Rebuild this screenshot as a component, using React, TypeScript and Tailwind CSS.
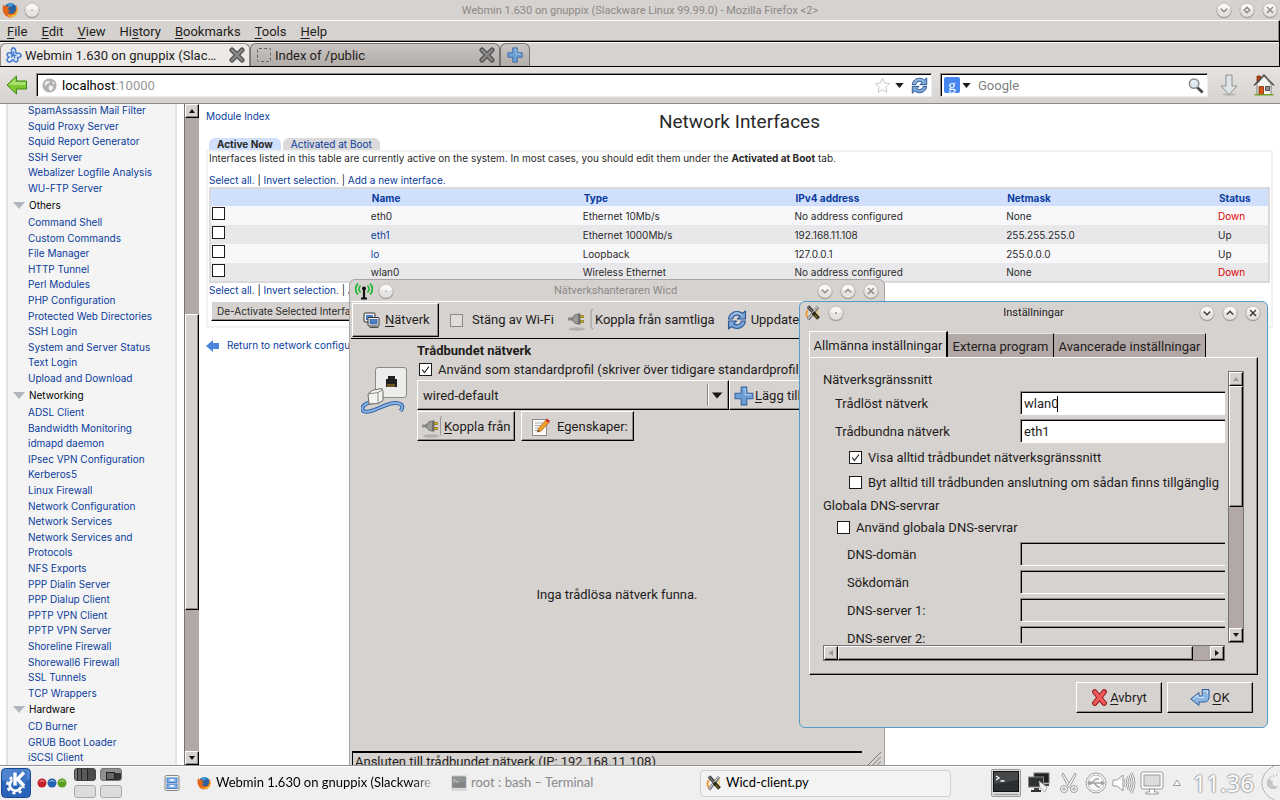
import type { ReactNode } from "react";

const UI = "font-['Roboto',sans-serif]";
const PANEL = "font-['Lato',sans-serif]";
const WEB = "font-['Inter',Arial,sans-serif]";
const RAISED =
  "border border-t-white border-l-white border-r-black border-b-black bg-[#d6d2cf] shadow-[inset_-1px_-1px_0_#8f8a87]";
const SUNKEN =
  "border border-t-[#8f8a87] border-l-[#8f8a87] border-r-[#eee] border-b-[#eee] bg-white shadow-[inset_1px_1px_0_#000]";

/* ---------- icons ---------- */

function Firefox({ className }: { className: string }) {
  return (
    <svg viewBox="0 0 16 16" className={className} aria-hidden="true">
      <circle cx="8.4" cy="7.2" r="6.2" fill="#2b5f9e" />
      <path d="M5 2.5a6 6 0 0 1 7 0c-1 1-2 .6-2.600 2.200L7 5z" fill="#3f9ad6" />
      <path d="M1.600 2.400C.6 4 .4 6 .8 8.600 1.600 13 5 15.600 8.600 15.400c4-.2 6.800-3.400 7-7.200.1-2-.5-4.200-1.800-5.400.6 1.600.6 3 .2 4.200-.3 2.600-2 4.600-4.600 4.800-2 .1-3.400-1-3.800-2.200 1 .4 2 .2 3-.6-1.400-.2-2.800-1.400-2.400-2.800.6-.8 1.200-.6 1.400-1.400C6 4.600 4.800 4 3 4.200c-.6-.4-1-1-1.400-1.800z" fill="#e2661a" />
      <path d="M14.200 4c1 3 .4 6-1.400 7.800-2 2-5 2.200-7.400.6 1 2.200 3.800 3 6.200 2 2.600-1.200 4-4 3.800-6.800-.1-1.400-.5-2.600-1.200-3.600z" fill="#fbc02a" />
    </svg>
  );
}

function RoundButton({ label, kind, dim }: { label: string; kind: "dot" | "down" | "up" | "max" | "close"; dim?: boolean }) {
  return (
    <button aria-label={label} className="block size-4 shrink-0">
      <svg viewBox="0 0 16 16" className="size-4 overflow-visible">
        <circle cx="8" cy="8.700" r="7.500" fill="#8d8987" opacity=".75" />
        <circle cx="8" cy="8" r="7.100" fill="#e6e4e2" stroke="#b5b1ae" strokeWidth=".5" />
        <path d="M2 6.500a6.300 6.300 0 0 1 12 0c-4 2-8 2-12 0z" fill="#fff" opacity=".7" />
        <g fill="none" stroke={dim ? "#8e8b89" : "#3f3d3c"} strokeWidth="1.500">
          {kind === "dot" && <circle cx="8" cy="8" r=".4" strokeWidth=".8" />}
          {kind === "down" && <path d="M4.800 6.500 8 9.700l3.200-3.200" />}
          {kind === "up" && <path d="M4.800 9.500 8 6.300l3.200 3.200" />}
          {kind === "max" && <path d="M8 5.200 10.800 8 8 10.800 5.200 8z" />}
          {kind === "close" && <path d="m5 5 6 6m0-6-6 6" />}
        </g>
      </svg>
    </button>
  );
}

function WebminIcon() {
  return (
    <svg viewBox="0 0 16 16" className="size-4 shrink-0" aria-hidden="true">
      <g fill="#dfe9f8" stroke="#4a7fd0" strokeWidth="1.600" strokeLinejoin="round">
        <path d="M6 1.500c2-1.500 4 .5 3.500 3.500l1 1.500c2.500-1 5 .5 4.500 2.500-.3 1.500-2 1.500-3.500 1.500.5 2 1 4-1 4.500-1.500.5-2.500-1-3.500-2.500-1 1.500-3 3-5 2-2-1.200-.5-3.500 1-4.500C1 9.500.5 7 2 6c1.300-.8 2.500 0 4 .5C5.500 4.500 4.800 2.500 6 1.500z" />
      </g>
      <path d="M7.500 4.500v3l3 1.500M7.500 7.500 5 10.500M5 8l2.500-.5 1.500 4" fill="none" stroke="#4a7fd0" strokeWidth="1.300" />
    </svg>
  );
}

function TabClose() {
  return (
    <svg viewBox="0 0 16 16" className="size-4">
      <path d="m3 3 10 10m0-10L3 13" stroke="#4d4d4d" strokeWidth="5" strokeLinecap="round" />
      <path d="m3 3 10 10m0-10L3 13" stroke="#868686" strokeWidth="2.600" strokeLinecap="round" />
    </svg>
  );
}

function Plus({ className }: { className: string }) {
  return (
    <svg viewBox="0 0 18 18" className={className} aria-hidden="true">
      <path d="M6.500 1h5v5.500H17v5h-5.500V17h-5v-5.500H1v-5h5.500z" fill="#6d9fd6" stroke="#3566a5" strokeLinejoin="round" />
      <path d="M7.800 2.500h2.400v5.300h5.300" fill="none" stroke="#a9c8ec" />
    </svg>
  );
}

function Refresh({ className }: { className: string }) {
  return (
    <svg viewBox="0 0 20 20" className={className} aria-hidden="true">
      <g fill="#7aa6d8" stroke="#2a5591" strokeWidth="1.100" strokeLinejoin="round">
        <path d="M1.500 9C2 4.500 5.500 1.500 10 1.500c2.300 0 4.200.8 5.600 2L18.500 1v8h-8l2.700-2.700A5 5 0 0 0 10 5.200C7.500 5.200 6 7 5.600 9z" />
        <path d="M18.500 11c-.5 4.500-4 7.500-8.500 7.500-2.300 0-4.200-.8-5.600-2L1.500 19v-8h8l-2.700 2.700A5 5 0 0 0 10 14.800c2.500 0 4-1.800 4.400-3.800z" />
      </g>
      <path d="M3 8C4 4.500 7 2.700 10 2.900c2 0 3.800.8 5.400 2.500" fill="none" stroke="#b9d2ef" />
    </svg>
  );
}

function Wicd({ className }: { className: string }) {
  return (
    <svg viewBox="0 0 16 16" className={className} aria-hidden="true">
      <path d="M3 5C1 7.500 1 10.500 3 12.500" fill="none" stroke="#f0952c" strokeWidth="1.800" />
      <path d="M12.500 5c1 1.500 1 3 .5 4.500" fill="none" stroke="#f7c244" strokeWidth="1.200" />
      <path d="m3 1.500 6 6.500" stroke="#454545" strokeWidth="3.400" />
      <path d="m2.500 1.500 5 5" stroke="#9a9a9a" strokeWidth=".8" />
      <path d="M3 14.500 13 2" stroke="#777" strokeWidth="3.200" />
      <path d="M3 14 12.500 2" stroke="#d4d4d4" strokeWidth="1.200" />
      <path d="m8 7.500 5.500 6" stroke="#2e2a18" strokeWidth="3.800" />
      <path d="m10 10 2.500 3" stroke="#8a6a14" strokeWidth="1.200" />
    </svg>
  );
}

function PlugIcon({ small }: { small?: boolean }) {
  return (
    <svg viewBox={small ? "0 0 21 24" : "0 0 26 24"} className={small ? "h-6 w-[21px] shrink-0" : "h-6 w-[26px] shrink-0"} aria-hidden="true">
      <ellipse cx="9" cy="21" rx="8" ry="1.800" fill="#000" opacity=".16" />
      <path d="M0 11h5" stroke="#8a8a86" strokeWidth="3" />
      <path d="M4 11c1.500-4 4-5 6.500-4.800v9.600C8 16 5.500 15 4 11z" fill="#9a9a96" stroke="#63635f" />
      <path d="M10 5.500h2.500v11H10z" fill="#6e6e6a" />
      <path d="M12.500 7.500h3v2h-3zm0 5h3v2h-3z" fill="#dcb51e" stroke="#7c6714" strokeWidth=".7" />
      <path d={small ? "M20 1.500c-1.500 0-1.500 1-1.500 2.500v14c0 1.500 0 2.500 1.500 2.500" : "M25 1.500c-2 0-2 1-2 2.500v14c0 1.500 0 2.500 2 2.500"} fill="none" stroke="#9a9794" />
    </svg>
  );
}

function Terminal({ className, dim }: { className: string; dim?: boolean }) {
  return (
    <svg viewBox="0 0 30 28" className={className} opacity={dim ? 0.55 : 1} aria-hidden="true">
      <rect x=".5" y=".5" width="29" height="27" rx="1.500" fill="#d8d8d8" stroke="#9c9c9c" />
      <rect x="2.500" y="2.500" width="25" height="20" fill="#2b2f33" stroke="#111" />
      <path d="M3 3h24v8L3 15z" fill="#fff" opacity=".12" />
      <path d="m5 7 3 2-3 2M9.500 12h4" fill="none" stroke="#fff" strokeWidth="1.300" />
      <path d="M3 25.500h24" stroke="#999" />
    </svg>
  );
}

/* ---------- shared controls ---------- */

function Arrow({ dir, dim }: { dir: "up" | "down" | "left" | "right"; dim?: boolean }) {
  const d = {
    up: "M4 2 7 6H1z",
    down: "M1 2h6L4 6z",
    left: "M1.500 4 6 1v6z",
    right: "M6 4 2 1v6z",
  }[dir];
  return (
    <svg viewBox="0 0 8 8" className="size-2">
      <path d={d} fill={dim ? "#a09896" : "#161616"} />
    </svg>
  );
}

function ScrollButton({ dir, dim, label }: { dir: "up" | "down" | "left" | "right"; dim?: boolean; label: string }) {
  return (
    <button aria-label={label} className={`flex size-[14px] shrink-0 items-center justify-center ${RAISED}`}>
      <Arrow dir={dir} dim={dim} />
    </button>
  );
}

function Check({ id, checked }: { id: string; checked?: boolean }) {
  return (
    <span className="relative flex size-[13px] shrink-0">
      <input id={id} type="checkbox" defaultChecked={checked} className="peer size-[13px] appearance-none border border-[#1d1b1a] bg-white" />
      <svg viewBox="0 0 13 13" className="pointer-events-none absolute inset-0 hidden peer-checked:block">
        <path d="m3 6.500 2.400 3L10 3.500" fill="none" stroke="#222" strokeWidth="1.200" />
      </svg>
    </span>
  );
}

/* ---------- browser ---------- */

const MENUS = [
  ["", "F", "ile"],
  ["", "E", "dit"],
  ["", "V", "iew"],
  ["Hi", "s", "tory"],
  ["", "B", "ookmarks"],
  ["", "T", "ools"],
  ["", "H", "elp"],
];

function BrowserChrome() {
  return (
    <header className={`shrink-0 bg-[#d6d2cf] text-[13px] text-[#1f1d1c] ${UI}`}>
      <div className="flex h-5 items-center gap-1.5 pr-0.5 pl-0.5">
        <Firefox className="size-4 shrink-0" />
        <RoundButton label="Window menu" kind="dot" dim />
        <h1 className="min-w-0 flex-1 truncate pt-0.5 pl-6 text-center text-[11px] text-[#8d8987]">
          Webmin 1.630 on gnuppix (Slackware Linux 99.99.0) - Mozilla Firefox &lt;2&gt;
        </h1>
        <div className="flex gap-[7px]">
          <RoundButton label="Minimize" kind="down" dim />
          <RoundButton label="Maximize" kind="max" dim />
          <RoundButton label="Close" kind="close" dim />
        </div>
      </div>
      <nav className="flex h-[22px] items-center gap-[14px] border-t border-r border-b border-t-white border-r-black border-b-black pt-0.5 pl-[7px] shadow-[inset_-1px_-1px_0_#8f8a87]">
        {MENUS.map(([a, k, b]) => (
          <button key={k + b} className="leading-5">
            {a}
            <u className="underline-offset-2">{k}</u>
            {b}
          </button>
        ))}
      </nav>
      <div className="flex h-[25px] items-end border-r border-b border-r-black border-b-black shadow-[inset_0_1px_0_#fff]">
        <div className="flex h-[23px] w-[250px] items-center rounded-t-md border border-b-0 border-[#8f8a87] bg-[#ece9e7] pr-1 pl-[5px]">
          <WebminIcon />
          <button className="min-w-0 flex-1 truncate pt-px pl-[3px] text-left">Webmin 1.630 on gnuppix (Slac…</button>
          <button aria-label="Close tab">
            <TabClose />
          </button>
        </div>
        <div className="flex h-[23px] w-[250px] items-center rounded-t-md border border-b-0 border-[#777371] bg-linear-to-b from-[#c9c4c1] to-[#b3adaa] pr-1 pl-1.5">
          <span className="size-[14px] rounded-xs border border-dashed border-[#666]" />
          <button className="min-w-0 flex-1 truncate pt-px pl-1 text-left">Index of /public</button>
          <button aria-label="Close tab">
            <TabClose />
          </button>
        </div>
        <button aria-label="New tab" className="flex h-[23px] w-[30px] items-center justify-center rounded-t-md border border-b-0 border-[#777371] bg-linear-to-b from-[#c9c4c1] to-[#b3adaa]">
          <Plus className="size-4" />
        </button>
      </div>
      <div className="flex h-[37px] items-center border-b border-[#8f8a87] bg-linear-to-b from-[#e6e3e1] to-[#d6d2cf] pr-[5px] pl-[6px]">
        <button aria-label="Back" className="mr-2">
          <svg viewBox="0 0 22 20" className="h-5 w-[22px]">
            <path d="M10.500 1v5H20.500v8H10.500v5L1 10z" fill="#7cc832" stroke="#3f8a12" strokeLinejoin="round" />
            <path d="M9.500 3.500v3.500h10v3H2.500z" fill="#b5e67c" opacity=".8" />
          </svg>
        </button>
        <div className={`flex h-6 min-w-0 flex-1 items-center pr-[3px] pl-[5px] ${SUNKEN}`}>
          <svg viewBox="0 0 16 16" className="size-[15px] shrink-0" aria-hidden="true">
            <circle cx="8" cy="8" r="7.500" fill="#b0b0b0" />
            <path d="M3 5c2-2.500 4-2 5-1.500S7 6 5.500 6.500 4.500 9 3 8zM8 8c2-.5 4 .5 4 2s-1.500 3.500-3 3.500S6.500 9 8 8zM11 3.500l3 2.500-2 .8z" fill="#f1f1f1" />
          </svg>
          <div className="relative ml-[5px] min-w-0 flex-1 leading-[22px]">
            <span className="pointer-events-none absolute inset-0 text-black" aria-hidden="true">
              localhost<span className="text-[#989898]">:10000</span>
            </span>
            <input aria-label="Address" defaultValue="localhost:10000" className="block w-full bg-transparent leading-5 text-transparent outline-none" />
          </div>
          <svg viewBox="0 0 18 18" className="size-[17px]" aria-hidden="true">
            <path d="m9 1.500 2.300 4.900 5.200.7-3.800 3.700.9 5.300L9 13.500l-4.600 2.600.9-5.300L1.500 7.100l5.200-.7z" fill="#fdfdfd" stroke="#c4c4c4" />
          </svg>
          <button aria-label="History list" className="mx-1">
            <svg viewBox="0 0 10 6" className="h-[5px] w-[9px]">
              <path d="M0 0h10L5 6z" fill="#1b1b1b" />
            </svg>
          </button>
          <button aria-label="Reload" className="ml-[3px]">
            <Refresh className="size-[17px]" />
          </button>
        </div>
        <div className={`ml-2 flex h-6 w-[268px] items-center px-[3px] ${SUNKEN}`}>
          <span className="flex size-4 items-center justify-center rounded-xs bg-[#4787ef] font-['Liberation_Serif',serif] text-[15px] leading-3 text-white">g</span>
          <svg viewBox="0 0 10 6" className="mx-[2px] h-[5px] w-[9px]" aria-hidden="true">
            <path d="M0 0h10L5 6z" fill="#1b1b1b" />
          </svg>
          <input aria-label="Search" placeholder="Google" className="ml-[5px] min-w-0 flex-1 bg-transparent pt-px leading-5 outline-none placeholder:text-[#808080]" />
          <button aria-label="Search">
            <svg viewBox="0 0 18 18" className="size-[17px]">
              <path d="m11 11 5.500 5.500" stroke="#4a4a4a" strokeWidth="3" />
              <circle cx="7.500" cy="7" r="5" fill="#dde8f0" stroke="#8a8a8a" strokeWidth="1.600" />
              <path d="M5 6.500C5.500 5 6.500 4.500 8 4.500" fill="none" stroke="#fff" />
            </svg>
          </button>
        </div>
        <button aria-label="Downloads" className="ml-3">
          <svg viewBox="0 0 18 22" className="h-[22px] w-[18px]">
            <ellipse cx="9" cy="20.500" rx="7" ry="1.200" fill="#000" opacity=".15" />
            <path d="M6 1h6v11h5l-8 8.500L1 12h5z" fill="#dfe4e6" stroke="#8b9193" />
          </svg>
        </button>
        <button aria-label="Home" className="ml-[15px]">
          <svg viewBox="0 0 22 22" className="size-[22px]">
            <path d="M4 2h3.500v6H4z" fill="#c1440e" stroke="#7c2c08" strokeWidth=".8" />
            <path d="M4 10 11 2l7 8v10.500H4z" fill="#f3f3ef" stroke="#666" strokeWidth=".8" />
            <path d="m1 11.500 10-10.500 10 10.500" fill="none" stroke="#4c4c4c" strokeWidth="1.300" />
            <path d="M6 12.500h4.500v8H6z" fill="#d5521a" stroke="#7c2c08" strokeWidth=".8" />
            <path d="M12.500 12.500h4v4h-4z" fill="#8e9296" stroke="#444" strokeWidth=".9" />
            <path d="M1.500 20.800h19" stroke="#6aa51e" strokeWidth="1.400" />
          </svg>
        </button>
      </div>
    </header>
  );
}

const GROUPS: { title?: string; items: string[] }[] = [
  {
    items: ["SpamAssassin Mail Filter", "Squid Proxy Server", "Squid Report Generator", "SSH Server", "Webalizer Logfile Analysis", "WU-FTP Server"],
  },
  {
    title: "Others",
    items: [
      "Command Shell", "Custom Commands", "File Manager", "HTTP Tunnel", "Perl Modules", "PHP Configuration",
      "Protected Web Directories", "SSH Login", "System and Server Status", "Text Login", "Upload and Download",
    ],
  },
  {
    title: "Networking",
    items: [
      "ADSL Client", "Bandwidth Monitoring", "idmapd daemon", "IPsec VPN Configuration", "Kerberos5", "Linux Firewall",
      "Network Configuration", "Network Services", "Network Services and", "Protocols", "NFS Exports", "PPP Dialin Server",
      "PPP Dialup Client", "PPTP VPN Client", "PPTP VPN Server", "Shoreline Firewall", "Shorewall6 Firewall", "SSL Tunnels", "TCP Wrappers",
    ],
  },
  { title: "Hardware", items: ["CD Burner", "GRUB Boot Loader", "iSCSI Client"] },
];

function Sidebar() {
  return (
    <aside className="flex w-[199px] shrink-0 bg-white pl-[6px]">
      <nav className="mr-[7px] flex-1 overflow-hidden border-x-2 border-[#e2e2e2] bg-[#f4f4f4]">
        <div className="-mt-0.5">
          {GROUPS.map((g, i) => (
            <section key={i}>
              {g.title && (
                <h2 className="flex h-[18px] items-center gap-1 pl-[5px] text-black">
                  <svg viewBox="0 0 12 7" className="h-[7px] w-3" aria-hidden="true">
                    <path d="M0 0h12L6 7z" fill="#b3b6bf" />
                  </svg>
                  {g.title}
                </h2>
              )}
              <ul>
                {g.items.map((t) => (
                  <li key={t} className="h-4 pl-5 leading-4 whitespace-nowrap text-[#0a3c9c] nth-[5n+2]:h-[15px] nth-[5n+4]:h-[15px]">
                    <a href="#">{t}</a>
                  </li>
                ))}
              </ul>
            </section>
          ))}
        </div>
      </nav>
      <div className="flex w-[15px] flex-col border-l border-[#777371] bg-[#b2a8a6]">
        <ScrollButton dir="up" label="Scroll up" />
        <div className="grow-[196]" />
        <div className={`grow-[295] ${RAISED}`} />
        <div className="grow-[141]" />
        <ScrollButton dir="down" label="Scroll down" />
      </div>
    </aside>
  );
}

function SelectLinks() {
  return (
    <p className="leading-[14px]">
      <a href="#" className="text-[#0a3c9c]">Select all.</a> |{" "}
      <a href="#" className="text-[#0a3c9c]">Invert selection.</a> |{" "}
      <a href="#" className="text-[#0a3c9c]">Add a new interface.</a>
    </p>
  );
}

const ROWS = [
  ["eth0", "Ethernet 10Mb/s", "No address configured", "None", "Down"],
  ["eth1", "Ethernet 1000Mb/s", "192.168.11.108", "255.255.255.0", "Up"],
  ["lo", "Loopback", "127.0.0.1", "255.0.0.0", "Up"],
  ["wlan0", "Wireless Ethernet", "No address configured", "None", "Down"],
];

function WebminPage() {
  return (
    <main className="min-w-0 flex-1 bg-white pt-1 pr-[7px] pl-[7px] text-[#2a2a2a]">
      <a href="#" className="block leading-4 text-[#0a3c9c]">Module Index</a>
      <h2 className="-mt-[15px] text-center font-['Roboto',sans-serif] text-[19px] leading-[26px]">Network Interfaces</h2>
      <div role="tablist" className="mt-[3px] flex gap-0.5 pl-[3px] leading-3">
        <button role="tab" aria-selected="true" className="h-3 rounded-t-md bg-[#d0dffc] px-2 font-bold">Active Now</button>
        <button role="tab" aria-selected="false" className="h-3 rounded-t-md bg-[#dadada] px-2 text-[#0a3c9c]">Activated at Boot</button>
      </div>
      <section className="border-2 border-[#f2f2f2] px-px pb-[5px]">
        <p className="leading-3">
          Interfaces listed in this table are currently active on the system. In most cases, you should edit them under the <b>Activated at Boot</b> tab.
        </p>
        <div className="mt-[9px]">
          <SelectLinks />
        </div>
        <table className="w-full table-fixed border-collapse border-2 border-[#dadada] text-left">
          <colgroup>
            <col className="w-[15%]" />
            <col className="w-1/5" />
            <col className="w-1/5" />
            <col className="w-1/5" />
            <col className="w-1/5" />
            <col className="w-[5%]" />
          </colgroup>
          <thead>
            <tr className="h-[18px] bg-[#d0dffc] text-[#0a3c9c]">
              <th aria-label="Selected" />
              {["Name", "Type", "IPv4 address", "Netmask", "Status"].map((h) => (
                <th key={h} className="p-0 pl-[3px] leading-4">{h}</th>
              ))}
            </tr>
          </thead>
          <tbody>
            {ROWS.map(([name, type, ip, mask, status]) => (
              <tr key={name} className="h-[19px] bg-[#f8f8fb] even:bg-[#e8e8ea]">
                <td className="p-0 pl-px align-top">
                  <input type="checkbox" aria-label={name} className="mt-px block size-[13px] appearance-none border border-[#1d1b1a] bg-white" />
                </td>
                <td className="p-0 pl-0.5 leading-4">
                  {name === "eth1" || name === "lo" ? <a href="#" className="text-[#0a3c9c]">{name}</a> : name}
                </td>
                <td className="p-0 pl-0.5 leading-4">{type}</td>
                <td className="p-0 pl-0.5 leading-4">{ip}</td>
                <td className="p-0 pl-0.5 leading-4">{mask}</td>
                <td className={status === "Down" ? "p-0 pl-0.5 leading-4 text-[#e00000]" : "p-0 pl-0.5 leading-4"}>{status}</td>
              </tr>
            ))}
          </tbody>
        </table>
        <SelectLinks />
        <button className={`mt-1 ml-0.5 h-5 px-[5px] ${RAISED}`}>De-Activate Selected Interfaces</button>
      </section>
      <a href="#" className="mt-[10px] flex items-center gap-2 text-[#0a3c9c]">
        <svg viewBox="0 0 13 12" className="h-3 w-[13px]" aria-hidden="true">
          <path d="M0 6 7 0v3h6v6H7v3z" fill="#4b86dc" />
        </svg>
        Return to network configuration
      </a>
    </main>
  );
}

/* ---------- Wicd window ---------- */

function WicdWindow() {
  return (
    <section className={`absolute top-[279px] left-[349px] flex h-[500px] w-[536px] flex-col rounded-t-md border border-[#a9a5a2] bg-[#d6d2cf] px-px text-[13px] text-[#1f1d1c] ${UI}`}>
      <header className="flex h-[21px] items-center gap-[5px] px-1">
        <svg viewBox="0 0 18 18" className="size-[18px]" aria-hidden="true">
          <g fill="none" stroke="#17b52f" strokeWidth="1.700">
            <path d="M5.500 3.500c-2 2-2 5 0 7M12.500 3.500c2 2 2 5 0 7" />
            <path d="M3 1.500c-3.200 3.200-3.200 8 0 11M15 1.500c3.200 3.200 3.200 8 0 11" />
          </g>
          <path d="M9 6v10M6 16.500h6" stroke="#111" strokeWidth="2.200" />
          <circle cx="9" cy="6.500" r="2" fill="#111" />
        </svg>
        <RoundButton label="Window menu" kind="dot" dim />
        <h2 className="flex-1 pt-0.5 pl-5 text-center text-[11px] text-[#8d8987]">Nätverkshanteraren Wicd</h2>
        <div className="flex gap-[7px]">
          <RoundButton label="Minimize" kind="down" dim />
          <RoundButton label="Maximize" kind="up" dim />
          <RoundButton label="Close" kind="close" dim />
        </div>
      </header>
      <div className="flex h-[38px] items-center overflow-hidden border-t border-b border-t-white border-b-black px-px whitespace-nowrap">
        <button className={`flex h-[34px] w-[87px] shrink-0 items-center gap-[5px] pl-[10px] ${RAISED}`}>
          <svg viewBox="0 0 17 17" className="size-[17px]" aria-hidden="true">
            <rect x="1" y="1" width="11" height="9" rx="1" fill="#eee" stroke="#333" />
            <rect x="3" y="3" width="7" height="5" fill="#4a7fc4" />
            <rect x="5" y="5.500" width="11" height="8.500" rx="1" fill="#eee" stroke="#333" />
            <rect x="7" y="7.500" width="7" height="4.500" fill="#4a7fc4" stroke="#1f4d8f" strokeWidth=".6" />
            <path d="M6.500 15.500h9" stroke="#555" />
          </svg>
          <span><u className="underline-offset-2">N</u>ätverk</span>
        </button>
        <label className="ml-[11px] flex items-center gap-[9px]">
          <input type="checkbox" className="size-[13px] appearance-none border border-[#8f8a87] bg-[#e0ddda]" />
          Stäng av Wi-Fi
        </label>
        <button className="ml-[14px] flex items-center gap-[1px]">
          <PlugIcon />
          Koppla från samtliga
        </button>
        <button className="ml-3 flex items-center gap-1">
          <Refresh className="size-5" />
          Uppdatera
        </button>
      </div>
      <div className="flex flex-1 flex-col overflow-hidden">
        <div className="flex">
          <div className="w-[66px] shrink-0 pt-[26px] pl-[10px]">
            <svg viewBox="0 0 48 50" className="h-[50px] w-12" aria-hidden="true">
              <rect x="14.500" y="2.500" width="31" height="30" rx="2.500" fill="#ececea" stroke="#8a8a86" />
              <path d="M25 14h2v-3h7v3h2v8H25z" fill="#20201e" />
              <path d="M27 19v3m2-3v3m2-3v3m2-3v3" stroke="#b9892a" />
              <path d="M12 37C3 38-1 43 2.500 46c6 4 22-8 31-8 7 0 10 3 6 8" fill="none" stroke="#3465a4" strokeWidth="4" />
              <path d="M12 37C3 38-1 43 2.500 46c6 4 22-8 31-8 7 0 10 3 6 8" fill="none" stroke="#8cb4e4" strokeWidth="1.800" />
              <path d="m7 29 5-4 9-1.500 1 3v9l-5 3-9 .5z" fill="#f2f2f0" stroke="#6b6b68" />
              <path d="m7 29 10-1.500 5-3M17 27.500V39" fill="none" stroke="#8a8a86" />
            </svg>
          </div>
          <div className="min-w-0 flex-1 whitespace-nowrap">
            <h3 className="pt-[3px] leading-[18px] font-bold">Trådbundet nätverk</h3>
            <label htmlFor="default-profile" className="flex h-[19px] items-center gap-[6px] pl-0.5">
              <Check id="default-profile" checked />
              Använd som standardprofil (skriver över tidigare standardprofil)
            </label>
            <div className="mt-px flex">
              <div className="relative h-[30px] w-[312px] shrink-0">
                <select aria-label="Wired profile" className={`size-full appearance-none pt-0.5 pl-[5px] outline-none ${RAISED}`}>
                  <option>wired-default</option>
                </select>
                <svg viewBox="0 0 20 22" className="pointer-events-none absolute top-1 right-0.5 h-[22px] w-5">
                  <path d="M.5 0v22" stroke="#8f8a87" />
                  <path d="M1.500 0v22" stroke="#fff" />
                  <path d="M5 8.500h10.500L10 14.500z" fill="#161616" />
                </svg>
              </div>
              <button className={`flex h-[30px] w-[100px] items-center gap-px pt-px pl-1 ${RAISED}`}>
                <Plus className="size-5" />
                <span><u className="underline-offset-2">L</u>ägg till</span>
              </button>
            </div>
            <div className="flex gap-[6px] pt-px">
              <button className={`flex h-[30px] w-[98px] items-center gap-px pt-px pl-1 ${RAISED}`}>
                <PlugIcon small />
                <span><u className="underline-offset-2">K</u>oppla från</span>
              </button>
              <button className={`flex h-[30px] w-[113px] items-center gap-[6px] pt-px pl-[9px] ${RAISED}`}>
                <svg viewBox="0 0 20 20" className="size-5 shrink-0" aria-hidden="true">
                  <rect x="1.500" y="2.500" width="14" height="16" fill="#fafafa" stroke="#8a8a86" />
                  <path d="M4 6h8M4 8.500h7M4 11h5M4 13.500h3" stroke="#aaa" />
                  <path d="m6.500 15 1-3.500L15 3l3 2.500-8 8.500z" fill="#f4a024" stroke="#9c5a0c" strokeWidth=".7" />
                  <path d="m14.500 3.500 1.500-2 3 2.500-1.500 2z" fill="#e02d2d" />
                  <path d="m6.500 15 .7-2 1.300 1.200z" fill="#222" />
                </svg>
                Egenskaper:
              </button>
            </div>
          </div>
        </div>
        <p className="pt-36 text-center">Inga trådlösa nätverk funna.</p>
        <div className="flex-1" />
        <div className="flex h-[27px] items-start">
          <div className="ml-px h-full w-[510px] border-t-2 border-l border-black pl-[2px] leading-[18px]">
            Ansluten till trådbundet nätverk (IP: 192.168.11.108)
          </div>
          <svg viewBox="0 0 14 14" className="mt-px ml-[6px] size-[13px]" aria-hidden="true">
            <path d="M0 14 14 0M5 14l9-9M10 14l4-4" stroke="#77736f" />
          </svg>
        </div>
      </div>
    </section>
  );
}

/* ---------- settings dialog ---------- */

function Field({ id, label, value, pad, focused }: { id: string; label: string; value?: string; pad: string; focused?: boolean }) {
  return (
    <div className="relative flex h-7 items-center">
      <label htmlFor={id} className={`w-[197px] shrink-0 pt-0.5 ${pad}`}>{label}</label>
      <input
        id={id}
        defaultValue={value}
        disabled={value === undefined}
        className="h-6 w-[240px] shrink-0 border-t border-b border-l border-t-[#8f8a87] border-b-white border-l-[#8f8a87] bg-white pl-[3px] shadow-[inset_1px_1px_0_#000] outline-none disabled:bg-[#d6d2cf]"
      />
      {focused && <span className="absolute top-[7px] left-[234px] h-4 w-px bg-black" />}
    </div>
  );
}

function CheckRow({ id, label, checked, pad }: { id: string; label: string; checked?: boolean; pad: string }) {
  return (
    <label htmlFor={id} className={`flex h-[25px] items-center gap-[6px] ${pad}`}>
      <Check id={id} checked={checked} />
      {label}
    </label>
  );
}

function ActionButton({ children }: { children: ReactNode }) {
  return <button className={`flex h-[31px] w-[86px] items-center justify-center gap-0.5 ${RAISED}`}>{children}</button>;
}

function SettingsDialog() {
  return (
    <section className={`absolute top-[301px] left-[799px] flex h-[427px] w-[469px] flex-col rounded-md border border-[#4f9dcc] bg-[#d6d2cf] text-[13px] text-[#1f1d1c] ${UI}`}>
      <header className="flex h-[22px] shrink-0 items-center gap-[7px] pr-[6px] pl-[5px]">
        <Wicd className="size-4" />
        <RoundButton label="Window menu" kind="dot" />
        <h2 className="flex-1 pt-px pl-6 text-center text-[11px]">Inställningar</h2>
        <div className="flex gap-[7px]">
          <RoundButton label="Minimize" kind="down" />
          <RoundButton label="Maximize" kind="up" />
          <RoundButton label="Close" kind="close" />
        </div>
      </header>
      <div role="tablist" className="mt-[7px] flex items-end pl-[9px] whitespace-nowrap">
        <button role="tab" aria-selected="true" className="h-[26px] w-[139px] border-t border-r-2 border-l border-t-white border-r-black border-l-white pt-0.5">Allmänna inställningar</button>
        <button role="tab" aria-selected="false" className="h-6 w-[106px] border-t border-r border-t-[#e6e3e1] border-r-black bg-[#b2a8a6] pt-0.5">Externa program</button>
        <button role="tab" aria-selected="false" className="h-6 w-[152px] border-t border-r border-t-[#e6e3e1] border-r-black bg-[#b2a8a6] pt-0.5">Avancerade inställningar</button>
      </div>
      <div className={`mr-[9px] ml-[9px] flex h-[318px] flex-col pt-[13px] pl-[13px] ${RAISED}`}>
        <div className="flex h-[272px]">
          <div className="w-[402px] shrink-0 overflow-hidden whitespace-nowrap">
            <h3 className="h-[18px] leading-[18px]">Nätverksgränssnitt</h3>
            <Field id="wireless" label="Trådlöst nätverk" value="wlan0" pad="pl-3" focused />
            <Field id="wired" label="Trådbundna nätverk" value="eth1" pad="pl-3" />
            <CheckRow id="show-wired" label="Visa alltid trådbundet nätverksgränssnitt" checked pad="pl-[26px]" />
            <CheckRow id="prefer-wired" label="Byt alltid till trådbunden anslutning om sådan finns tillgänglig" pad="pl-[26px]" />
            <h3 className="h-5 leading-[22px]">Globala DNS-servrar</h3>
            <CheckRow id="global-dns" label="Använd globala DNS-servrar" pad="pl-[14px]" />
            <Field id="dns-domain" label="DNS-domän" pad="pl-6" />
            <Field id="search-domain" label="Sökdomän" pad="pl-6" />
            <Field id="dns1" label="DNS-server 1:" pad="pl-6" />
            <Field id="dns2" label="DNS-server 2:" pad="pl-6" />
          </div>
          <div className="ml-[3px] flex w-4 flex-col border border-[#777371] bg-[#b2a8a6]">
            <ScrollButton dir="up" dim label="Scroll up" />
            <div className={`h-[121px] ${RAISED}`} />
            <div className="flex-1" />
            <ScrollButton dir="down" label="Scroll down" />
          </div>
        </div>
        <div className="mt-0.5 flex h-4 w-[402px] border border-[#777371] bg-[#b2a8a6]">
          <ScrollButton dir="left" dim label="Scroll left" />
          <div className={`h-[14px] w-[355px] ${RAISED}`} />
          <div className="flex-1" />
          <ScrollButton dir="right" label="Scroll right" />
        </div>
      </div>
      <footer className="flex justify-end gap-[5px] pt-[7px] pr-[14px]">
        <ActionButton>
          <svg viewBox="0 0 18 20" className="h-5 w-[17px]" aria-hidden="true">
            <path d="m4 3.500 10 12m0-12-10 12" stroke="#8f1313" strokeWidth="5.600" strokeLinecap="round" />
            <path d="m4 3.500 10 12m0-12-10 12" stroke="#ef5a5a" strokeWidth="3.600" strokeLinecap="round" />
          </svg>
          <span><u className="underline-offset-2">A</u>vbryt</span>
        </ActionButton>
        <ActionButton>
          <svg viewBox="0 0 20 20" className="size-5" aria-hidden="true">
            <path d="M12 1.500h7V9c0 3-1.500 5-4.500 5H9v3.500L.8 11 9 4.500V8h2.500c.6 0 .8-.4.800-1z" fill="#8db5e2" stroke="#2f5f9f" strokeLinejoin="round" />
            <path d="M13.500 3h4v3M3 11l5-4v2.500h6" fill="none" stroke="#d7e6f7" />
          </svg>
          <span><u className="underline-offset-2">O</u>K</span>
        </ActionButton>
      </footer>
    </section>
  );
}

/* ---------- panel ---------- */

function Taskbar() {
  return (
    <footer className={`relative z-10 flex h-[35px] shrink-0 items-center overflow-hidden border-t border-[#8f8f8f] bg-[#efefef] text-[13px] text-black shadow-[inset_0_1px_0_#fff] ${PANEL}`}>
      <button aria-label="Application launcher" className="ml-px">
        <svg viewBox="0 0 30 30" className="size-[30px]">
          <rect x=".5" y=".5" width="29" height="29" rx="4" fill="#2a63b8" stroke="#184a91" />
          <path d="M1 5a4 4 0 0 1 4-4h20a4 4 0 0 1 4 4v6C20 15 9 15 1 12z" fill="#6fa4e6" opacity=".5" />
          <circle cx="14.500" cy="17" r="5.800" fill="none" stroke="#fff" strokeWidth="2.800" />
          <circle cx="14.500" cy="17" r="8.200" fill="none" stroke="#fff" strokeWidth="2.600" strokeDasharray="3.100 3.340" />
          <path d="M11.500 3.500h14V12l-2 7-8-1h-4z" fill="#3a74c6" />
          <path d="M14 4.500v13M23 4.500 16.500 11l6.500 7" fill="none" stroke="#fff" strokeWidth="3.400" />
        </svg>
      </button>
      <svg viewBox="0 0 30 10" className="ml-[6px] h-[10px] w-[30px]" aria-hidden="true">
        <circle cx="5" cy="5" r="4.500" fill="#c4202a" />
        <circle cx="15" cy="5" r="4.500" fill="#2463b4" />
        <circle cx="25" cy="5" r="4.500" fill="#5aa01e" />
        <path d="M2.500 3.500q2.500-2 5 0M12.500 3.500q2.500-2 5 0M22.500 3.500q2.500-2 5 0" stroke="#fff" opacity=".6" fill="none" />
      </svg>
      <div className="ml-[7px] grid grid-cols-2 gap-x-1 gap-y-1">
        <button aria-label="Desktop 1" className="flex h-[13px] w-[22px] overflow-hidden rounded-[3px] border border-[#444] bg-[#5a5a5a]">
          <span className="h-full w-[3px] border-r border-[#222] bg-[#777]" />
          <span className="h-full w-[4px] border-r border-[#222]" />
          <span className="h-full w-[6px] border-r border-[#222]" />
          <span className="h-full flex-1 bg-[#4b4b4b]" />
        </button>
        <button aria-label="Desktop 2" className="flex h-[13px] w-[22px] items-end overflow-hidden rounded-[3px] border border-[#777] bg-[#8f8f8f]">
          <span className="ml-[5px] h-[8px] w-[9px] border border-[#222] bg-[#666]" />
          <span className="h-[7px] flex-1 bg-[#333]" />
        </button>
        <button aria-label="Desktop 3" className="h-[13px] w-[22px] rounded-[3px] border border-[#aaa] bg-[#dcdcdc]" />
        <button aria-label="Desktop 4" className="h-[13px] w-[22px] rounded-[3px] border border-[#aaa] bg-[#dcdcdc]" />
      </div>
      <button aria-label="File manager" className="ml-[42px]">
        <svg viewBox="0 0 16 16" className="size-4">
          <rect x="1" y=".5" width="14" height="15" rx="1.500" fill="#f1f1f1" stroke="#858585" />
          <rect x="3" y="3" width="10" height="4.500" fill="#86b4ea" stroke="#4b82c4" />
          <rect x="3" y="9" width="10" height="4.500" fill="#86b4ea" stroke="#4b82c4" />
          <path d="M6 5h4M6 11h4" stroke="#fff" strokeWidth="1.500" />
        </svg>
      </button>
      <div className="ml-[10px] flex min-w-0 flex-1 gap-1">
        <button className="flex h-[27px] w-[251px] items-center gap-[5px] pr-1.5 pl-[7px]">
          <Firefox className="size-[14px] shrink-0" />
          <span className="overflow-hidden mask-r-from-90% whitespace-nowrap">Webmin 1.630 on gnuppix (Slackware Linux</span>
        </button>
        <button className="flex h-[27px] w-[251px] items-center gap-1 pl-[6px] text-[#888]">
          <Terminal className="size-4" dim />
          root : bash – Terminal
        </button>
        <button className="flex h-[27px] w-[251px] items-center gap-1 rounded-sm border border-[#cfcfcf] bg-[#f3f3f3] pl-[5px]">
          <Wicd className="size-4" />
          Wicd-client.py
        </button>
      </div>
      <div className="flex shrink-0 items-center">
        <Terminal className="mr-[6px] h-7 w-[30px]" />
        <svg viewBox="0 0 24 22" className="mr-[8px] h-[22px] w-6" aria-hidden="true">
          <rect x="7" y="1" width="15" height="10" fill="#222" stroke="#777" />
          <rect x="1.500" y="5" width="15" height="10" fill="#2c3330" stroke="#888" />
          <path d="M7 16h5v2H7zM17 12h5v2h-5z" fill="#444" />
          <path d="M4 19h10" stroke="#333" strokeWidth="2" />
          <path d="m12 9 8 6-2 5-5-4z" fill="#eee" stroke="#999" strokeWidth=".7" />
        </svg>
        <svg viewBox="0 0 20 22" className="mr-[6px] h-[22px] w-5" fill="#fff" stroke="#9a9a9a" aria-hidden="true">
          <path d="m4 1 7 12 2 2-1.500 1L8 12.500 3 3z" />
          <path d="m16 1-7 12-2 2 1.500 1L12 12.500 17 3z" />
          <circle cx="5" cy="17" r="3.500" />
          <circle cx="15" cy="17" r="3.500" />
          <circle cx="5" cy="17" r="1.300" />
          <circle cx="15" cy="17" r="1.300" />
        </svg>
        <svg viewBox="0 0 22 22" className="mr-[5px] size-[22px]" fill="none" aria-hidden="true">
          <circle cx="11" cy="11" r="10" fill="#f8f8f8" stroke="#a5a5a5" />
          <circle cx="11" cy="11" r="8" stroke="#bbb" />
          <path d="M3 11h15M6 11c3-1 3-4 6-4h2M8 11c3 0 3 4 6 4h1" stroke="#a2a2a2" strokeWidth="1.400" />
          <circle cx="5" cy="11" r="2" fill="#a2a2a2" />
          <path d="m16 8.500 4 2.500-4 2.500z" fill="#a2a2a2" />
        </svg>
        <svg viewBox="0 0 24 24" className="mr-1 h-6 w-6" fill="#fff" stroke="#9a9a9a" aria-hidden="true">
          <path d="M1 9h4l6-5v16l-6-5H1z" />
          <path d="M13 8q2 4 0 8M16 5q4 7 0 14M19 2q6 10 0 20" fill="none" strokeWidth="2.800" />
          <path d="M13 8q2 4 0 8M16 5q4 7 0 14M19 2q6 10 0 20" fill="none" stroke="#fff" strokeWidth="1" />
        </svg>
        <svg viewBox="0 0 24 24" className="mr-[9px] h-6 w-6" aria-hidden="true">
          <rect x="1" y="1" width="22" height="17" rx="2" fill="#fff" stroke="#999" />
          <rect x="4" y="4" width="16" height="11" fill="#dcdcdc" stroke="#999" />
          <path d="M9.500 18h5v3H18v2H6v-2h3.500z" fill="#fff" stroke="#999" />
        </svg>
        <button aria-label="Show hidden icons" className="mr-3">
          <svg viewBox="0 0 8 8" className="size-2">
            <path d="M4 1 7.500 6.500h-7z" fill="#fff" stroke="#999" />
          </svg>
        </button>
        <time className="mr-[6px] font-['Noto_Sans',sans-serif] text-[24px] leading-8 text-white [text-shadow:0_0_2px_#888,0_0_2px_#888,0_0_1px_#999]">11.36</time>
        <svg viewBox="0 0 20 34" className="h-[34px] w-5" fill="none" aria-hidden="true">
          <path d="M14 0C-2 8-2 26 14 34" stroke="#b2b2b2" />
          <path d="M9 12c-4 4-3 10 3 11 4 .5 6-2 7-3-5 1-8-1-6-5-1 0-3-1-4-3z" fill="#c6c6c6" />
          <path d="M10 11h1m2-1h1m2-1h1" stroke="#bbb" strokeWidth="2" />
        </svg>
      </div>
    </footer>
  );
}

export default function App() {
  return (
    <div className="relative flex h-screen flex-col overflow-hidden bg-white">
      <BrowserChrome />
      <div className={`flex min-h-0 flex-1 overflow-hidden text-[10px] ${WEB}`}>
        <Sidebar />
        <WebminPage />
      </div>
      <WicdWindow />
      <SettingsDialog />
      <Taskbar />
    </div>
  );
}
